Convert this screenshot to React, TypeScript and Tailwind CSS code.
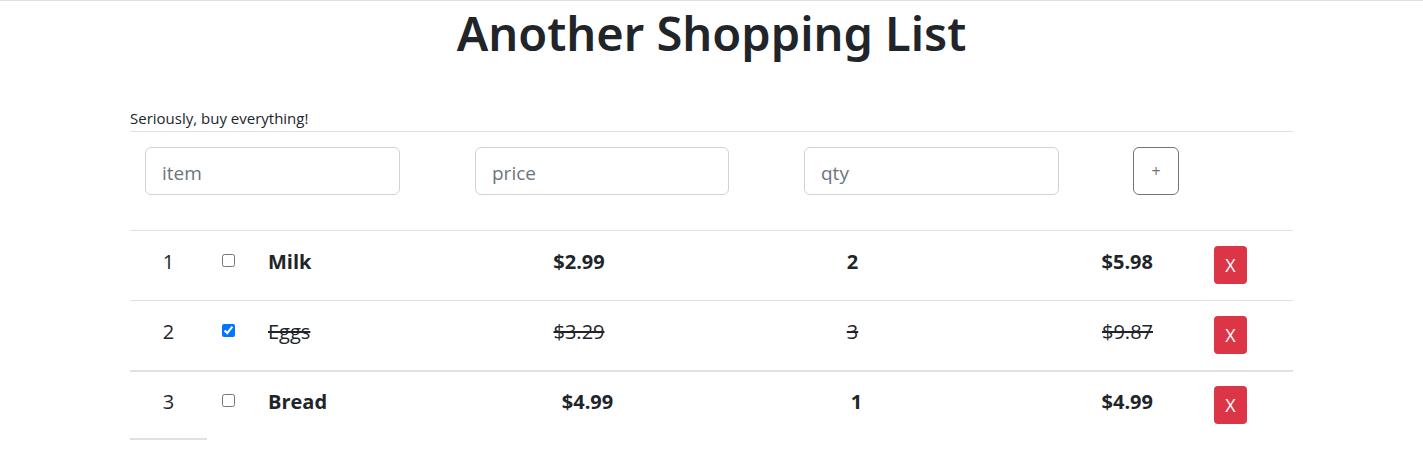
import React from 'react';

type Item = { id: number; name: string; price: string; qty: string; total: string; done: boolean };

const items: Item[] = [
  { id: 1, name: 'Milk', price: '$2.99', qty: '2', total: '$5.98', done: false },
  { id: 2, name: 'Eggs', price: '$3.29', qty: '3', total: '$9.87', done: true },
];

const font = { fontFamily: '"Open Sans", "Noto Sans", "Liberation Sans", sans-serif' };

function Row({ item, wide }: { item: Item; wide?: boolean }) {
  const text = item.done ? 'font-normal line-through' : 'font-bold';
  return (
    <div className={`flex items-start text-[20px] leading-[32px] text-[#212529] ${wide ? 'pt-[14px] h-[66px]' : 'pt-[15px] h-[69px]'}`}>
      <div className="w-[77px] shrink-0 text-center">{item.id}</div>
      <div className="w-[46px] shrink-0 pl-[15px] pt-[8px]">
        <input type="checkbox" readOnly checked={item.done} className="block w-[13px] h-[13px] m-0" />
      </div>
      <div className={`${wide ? 'w-[217px]' : 'w-[200px]'} shrink-0 pl-[15px] ${text}`}>{item.name}</div>
      <div className={`${wide ? 'w-[235px]' : 'w-[252px]'} shrink-0 text-center ${text}`}>{item.price}</div>
      <div className={`${wide ? 'w-[303px]' : 'w-[295px]'} shrink-0 text-center ${text}`}>{item.qty}</div>
      <div className={`${wide ? 'w-[191px]' : 'w-[199px]'} shrink-0 text-right pr-[46px] ${text}`}>{item.total}</div>
      <div className="pl-[15px]">
        <button className="w-[33px] h-[38px] rounded-[4px] bg-[#dc3545] text-white text-[18px] leading-none">X</button>
      </div>
    </div>
  );
}

export default function App() {
  return (
    <div className="min-h-[450px] bg-white border-t border-[#dee2e6]" style={font}>
      <div className="w-[1163px] ml-[130px]">
        <h1
          className="-mt-[3px] text-center text-[47px] leading-[70px] font-semibold text-[#212529]"
          style={{ fontFamily: '"Noto Sans", "Open Sans", sans-serif' }}
        >
          Another Shopping List
        </h1>

        <p className="mt-[38px] text-[15px] leading-[24px] text-[#212529] pb-[1px] border-b border-[#dee2e6]">
          Seriously, buy everything!
        </p>

        <div className="flex items-start pt-[15px] h-[99px] border-b border-[#dee2e6]">
          <input
            placeholder="item"
            className="ml-[15px] w-[255px] h-[48px] px-[16px] pt-[3px] text-[19px] border border-[#ced4da] rounded-[6px] outline-none placeholder:text-[#6c757d]"
          />
          <input
            placeholder="price"
            className="ml-[75px] w-[254px] h-[48px] px-[16px] pt-[3px] text-[19px] border border-[#ced4da] rounded-[6px] outline-none placeholder:text-[#6c757d]"
          />
          <input
            placeholder="qty"
            className="ml-[75px] w-[255px] h-[48px] px-[16px] pt-[3px] text-[19px] border border-[#ced4da] rounded-[6px] outline-none placeholder:text-[#6c757d]"
          />
          <button className="ml-[74px] w-[46px] h-[48px] border border-[#6c757d] rounded-[6px] text-[#6c757d] text-[16px]">
            +
          </button>
        </div>

        <div className="border-b border-[#dee2e6]">
          <Row item={items[0]} />
        </div>
        <div className="border-b-2 border-[#dee2e6]">
          <Row item={items[1]} />
        </div>
        <Row item={{ id: 3, name: 'Bread', price: '$4.99', qty: '1', total: '$4.99', done: false }} wide />
        <div className="w-[77px] border-b-2 border-[#dee2e6]" />
      </div>
    </div>
  );
}
